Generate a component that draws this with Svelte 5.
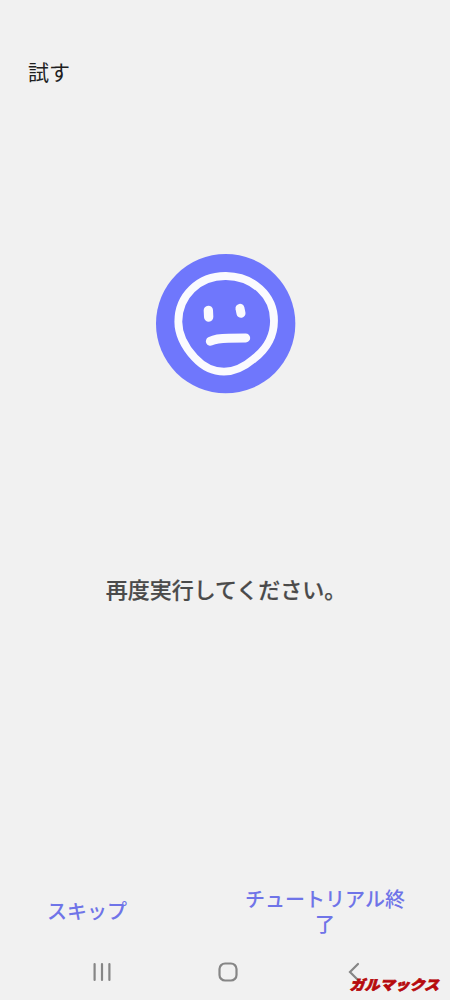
<script>
  const title = '試す';
  const message = '再度実行してください。';
</script>

<div class="screen">
  <header class="title">{title}</header>

  <main class="content">
    <svg class="face" viewBox="0 0 450 450" aria-hidden="true">
      <circle cx="227" cy="227" r="209" fill="#6f77fc" />
      <g fill="none" stroke="#fafafe" stroke-linecap="round" stroke-linejoin="round">
        <path
          stroke-width="23.5"
          d="M228 84 C308 85 372 142 372 218 C372 264 349 303 312 332 C284 356 254 371 222 371 C190 371 158 355 134 329 C105 297 85 262 85 221 C85 144 146 83 228 84 Z"
        />
        <path stroke-width="28" d="M175 187 L176 207" />
        <path stroke-width="27" d="M270 181 L273 196" />
        <path stroke-width="27" d="M181 280 C195 273 215 271 235 271 L287 270" />
      </g>
    </svg>
    <p class="message">{message}</p>
  </main>

  <footer class="actions">
    <button class="action skip">スキップ</button>
    <button class="action finish">チュートリアル終了</button>
  </footer>

  <nav class="navbar">
    <svg class="recents" viewBox="0 0 18 20">
      <path d="M1.6 2V18M9 2V18M16.4 2V18" />
    </svg>
    <svg class="home" viewBox="0 0 20 20">
      <rect x="1.5" y="1.5" width="17" height="17" rx="5.6" />
    </svg>
    <svg class="back" viewBox="0 0 12 20">
      <path d="M10 2L2 10L10 18" />
    </svg>
  </nav>

  <span class="watermark">ガルマックス</span>
</div>

<style>
  :global(body) {
    background: #f1f1f1;
  }

  .screen {
    position: relative;
    display: flex;
    flex-direction: column;
    box-sizing: border-box;
    width: 450px;
    height: 1000px;
    background: #f1f1f1;
    overflow: hidden;
    font-family: "Noto Sans CJK JP", sans-serif;
  }

  .title {
    height: 30px;
    padding: 56px 0 0 28px;
    font-size: 21px;
    line-height: 30px;
    color: #202020;
  }

  .content {
    display: flex;
    flex-direction: column;
    align-items: center;
    flex: 1;
    padding-top: 162px;
  }

  .face {
    width: 150px;
    height: 150px;
  }

  .message {
    margin: 174px 0 0 2px;
    font-size: 22px;
    font-weight: 500;
    line-height: 32px;
    color: #4a4a4a;
    -webkit-text-stroke: 0.2px #4a4a4a;
  }

  .actions {
    display: flex;
    justify-content: space-between;
    align-items: center;
    height: 50px;
    padding: 0 44px 0 47px;
    margin-bottom: 8px;
  }

  .action {
    padding: 0;
    border: none;
    background: none;
    font-family: inherit;
    font-size: 20px;
    font-weight: 500;
    line-height: 25px;
    text-align: center;
    color: #6f74e8;
  }

  .skip {
    padding-bottom: 2px;
  }

  .finish {
    width: 162px;
  }

  .navbar {
    display: flex;
    align-items: center;
    height: 56px;
    padding-left: 93px;
  }

  .navbar svg {
    fill: none;
    stroke: #868686;
    stroke-width: 2.2;
    stroke-linecap: round;
  }

  .recents {
    width: 18px;
    height: 20px;
  }

  .home {
    width: 20px;
    height: 20px;
    margin-left: 107px;
  }

  .back {
    width: 12px;
    height: 20px;
    margin-left: 110px;
  }

  .watermark {
    position: absolute;
    left: 351px;
    top: 974px;
    font-size: 15px;
    font-weight: 900;
    line-height: 20px;
    white-space: nowrap;
    color: #b60a0d;
    -webkit-text-stroke: 0.8px #b60a0d;
    transform: skewX(-16deg) scaleY(0.92);
  }
</style>
